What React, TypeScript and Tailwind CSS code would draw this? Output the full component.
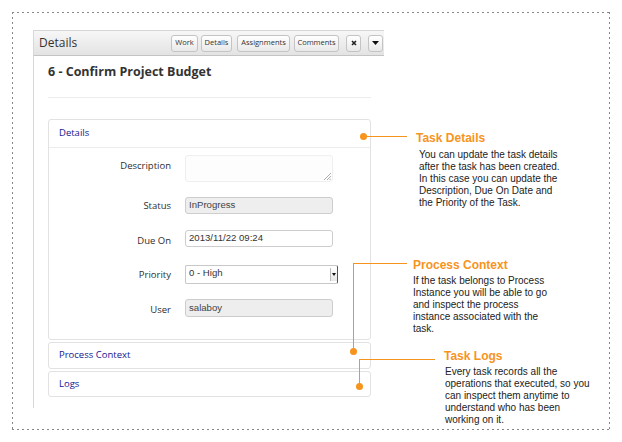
import React from "react";

const ORANGE = "bg-[#f7941d]";

function Btn({ w, ml, children }: { w: string; ml: string; children: React.ReactNode }) {
  return (
    <div
      className={`${w} ${ml} h-[17px] border border-[#c4c4c4] rounded-[3px] bg-gradient-to-b from-white to-[#e9e9e9] text-[7.5px] text-[#333] flex items-center justify-center leading-none`}
    >
      {children}
    </div>
  );
}

function Label({ children, extra = "" }: { children: React.ReactNode; extra?: string }) {
  return (
    <div className={`w-[122px] text-right text-[9.5px] leading-[13px] text-[#2e2e2e] ${extra}`}>{children}</div>
  );
}

function Screen() {
  return (
    <div className="w-[351px] h-[378px] border-l border-[#d8d8d8] flex flex-col font-['Open_Sans',sans-serif]">
      <div className="h-[26px] flex items-center justify-between border-t border-b border-t-[#d6d6d6] border-b-[#c4c4c4] bg-gradient-to-b from-[#f7f7f7] to-[#e3e3e3] pl-[5px] pr-[1px]">
        <span className="text-[12px] text-[#333]">Details</span>
        <div className="flex items-center">
          <Btn w="w-[27px]" ml="ml-0">Work</Btn>
          <Btn w="w-[31px]" ml="ml-[3px]">Details</Btn>
          <Btn w="w-[53px]" ml="ml-[5px]">Assignments</Btn>
          <Btn w="w-[45px]" ml="ml-[4px]">Comments</Btn>
          <Btn w="w-[15px]" ml="ml-[7px]">
            <svg width="6" height="6" viewBox="0 0 6 6">
              <path d="M1 1 L5 5 M5 1 L1 5" stroke="#222" strokeWidth="1.6" />
            </svg>
          </Btn>
          <Btn w="w-[15px]" ml="ml-[7px]">
            <svg width="7" height="4" viewBox="0 0 7 4">
              <path d="M0 0 H7 L3.5 4 Z" fill="#111" />
            </svg>
          </Btn>
        </div>
      </div>
      <div className="flex-1 pl-[14px] pr-[13px] flex flex-col">
        <div className="mt-[8px] text-[12.5px] leading-[16px] font-bold text-[#333]">6 - Confirm Project Budget</div>
        <div className="mt-[17px] h-px bg-[#ececec]" />
        <div className="mt-[21px] border border-[#e2e2e2] rounded-[3px] flex flex-col">
          <div className="h-[28px] border-b border-[#ececec] flex items-center pl-[10px] text-[9.5px] text-[#16168f]">
            Details
          </div>
          <div className="pt-[7px] pb-[22px] flex flex-col">
            <div className="flex items-start">
              <Label extra="pt-[4px]">Description</Label>
              <div className="ml-[14px] w-[148px] h-[27px] border border-[#efefef] rounded-[3px] bg-[#fdfdfd] relative">
                <svg className="absolute right-[1px] bottom-[1px]" width="7" height="7" viewBox="0 0 7 7">
                  <path d="M7 0 L0 7 M7 3 L3 7 M7 5.5 L5.5 7" stroke="#999" strokeWidth="0.8" />
                </svg>
              </div>
            </div>
            <div className="flex items-center mt-[15px]">
              <Label>Status</Label>
              <div className="ml-[14px] w-[148px] h-[17px] border border-[#cdcdcd] rounded-[3px] bg-[#eeeeee] pl-[3px] flex items-center text-[9.6px] text-[#444] font-['Liberation_Sans',Arial,sans-serif]">
                InProgress
              </div>
            </div>
            <div className="flex items-center mt-[16px]">
              <Label extra="pt-[3px]">Due On</Label>
              <div className="ml-[14px] w-[148px] h-[17px] border border-[#cdcdcd] rounded-[3px] bg-white pl-[3px] flex items-center text-[9.6px] text-[#333] font-['Liberation_Sans',Arial,sans-serif]">
                2013/11/22 09:24
              </div>
            </div>
            <div className="flex items-center mt-[18px]">
              <Label>Priority</Label>
              <div className="ml-[14px] w-[153px] h-[19px] border border-[#c8c8c8] border-r-[#555] rounded-[2px] bg-white flex font-['Liberation_Sans',Arial,sans-serif]">
                <div className="flex-1 pl-[3px] pt-[1px] text-[9.6px] leading-[12px] text-[#333]">0 - High</div>
                <div className="w-[7px] my-[2px] border-l border-[#bbb] bg-gradient-to-b from-white to-[#e6e6e6] flex items-center justify-center">
                  <svg width="4" height="3" viewBox="0 0 4 3">
                    <path d="M0 0 H4 L2 3 Z" fill="#111" />
                  </svg>
                </div>
              </div>
            </div>
            <div className="flex items-center mt-[15px]">
              <Label extra="pt-[3px]">User</Label>
              <div className="ml-[14px] w-[148px] h-[18px] border border-[#cdcdcd] rounded-[3px] bg-[#eeeeee] pl-[3px] flex items-center text-[9.6px] text-[#444] font-['Liberation_Sans',Arial,sans-serif]">
                salaboy
              </div>
            </div>
          </div>
        </div>
        <div className="mt-[2px] h-[27px] border border-[#e2e2e2] rounded-[3px] flex items-center pl-[10px] text-[9.5px] text-[#16168f]">
          Process Context
        </div>
        <div className="mt-[2px] h-[26px] border border-[#e2e2e2] rounded-[3px] flex items-center pl-[10px] text-[9.5px] text-[#16168f]">
          Logs
        </div>
      </div>
    </div>
  );
}

function Callouts() {
  return (
    <>
      {/* Task Details */}
      <div className={`absolute left-[363px] top-[136px] w-[44px] h-px ${ORANGE}`} />
      <div className={`absolute left-[360px] top-[133px] w-[7px] h-[7px] rounded-full ${ORANGE}`} />
      <div className="absolute left-[416px] top-[131px] text-[12px] leading-[14px] font-bold text-[#f7941d] whitespace-nowrap">
        Task Details
      </div>
      <div className="absolute left-[419px] top-[149px] text-[10px] leading-[12px] text-[#222] whitespace-nowrap">
        You can update the task details
        <br />
        after the task has been created.
        <br />
        In this case you can update the
        <br />
        Description, Due On Date and
        <br />
        the Priority of the Task.
      </div>

      {/* Process Context */}
      <div className={`absolute left-[353px] top-[263px] w-[54px] h-px ${ORANGE}`} />
      <div className={`absolute left-[353px] top-[263px] w-px h-[88px] ${ORANGE}`} />
      <div className={`absolute left-[350px] top-[348px] w-[7px] h-[7px] rounded-full ${ORANGE}`} />
      <div className="absolute left-[413px] top-[258px] text-[12px] leading-[14px] font-bold text-[#f7941d] whitespace-nowrap">
        Process Context
      </div>
      <div className="absolute left-[413px] top-[275px] text-[10px] leading-[12px] text-[#222] whitespace-nowrap">
        If the task belongs to Process
        <br />
        Instance you will be able to go
        <br />
        and inspect the process
        <br />
        instance associated with the
        <br />
        task.
      </div>

      {/* Task Logs */}
      <div className={`absolute left-[359px] top-[359px] w-[76px] h-px ${ORANGE}`} />
      <div className={`absolute left-[359px] top-[359px] w-px h-[27px] ${ORANGE}`} />
      <div className={`absolute left-[356px] top-[383px] w-[7px] h-[7px] rounded-full ${ORANGE}`} />
      <div className="absolute left-[444px] top-[349px] text-[12px] leading-[14px] font-bold text-[#f7941d] whitespace-nowrap">
        Task Logs
      </div>
      <div className="absolute left-[445px] top-[366px] text-[10px] leading-[12px] text-[#222] whitespace-nowrap">
        Every task records all the
        <br />
        operations that executed, so you
        <br />
        can inspect them anytime to
        <br />
        understand who has been
        <br />
        working on it.
      </div>
    </>
  );
}

export default function App() {
  return (
    <div className="relative w-[622px] h-[442px] bg-white p-[12px] font-['Liberation_Sans',Arial,sans-serif] text-[#222] overflow-hidden">
      <div className="w-full h-full pl-[21px] pt-[18px] bg-no-repeat bg-[repeating-linear-gradient(90deg,#888_0_2px,transparent_2px_5px),repeating-linear-gradient(90deg,#888_0_2px,transparent_2px_5px),repeating-linear-gradient(180deg,#888_0_2px,transparent_2px_5px),repeating-linear-gradient(180deg,#888_0_2px,transparent_2px_5px)] bg-[length:100%_1px,100%_1px,1px_100%,1px_100%] bg-[position:top_left,bottom_left,top_left,top_right]">
        <Screen />
      </div>
      <Callouts />
    </div>
  );
}
